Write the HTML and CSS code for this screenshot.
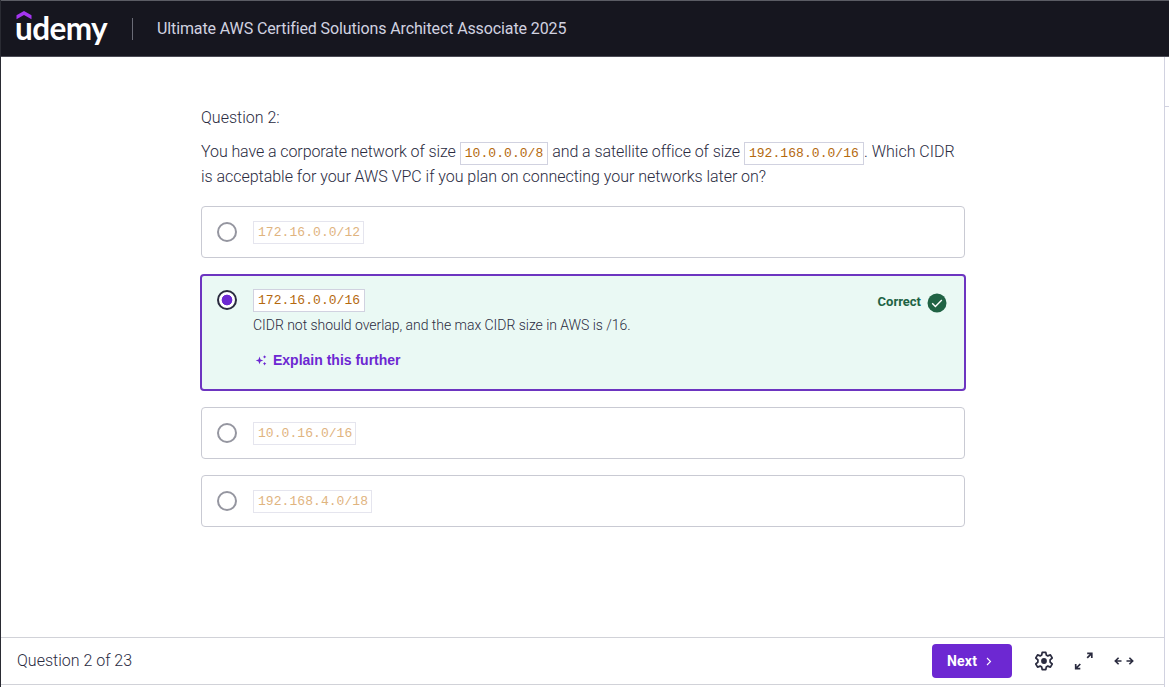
FILE: index.html
```html
<!DOCTYPE html>
<html lang="en">
<head>
<meta charset="utf-8">
<title>Ultimate AWS Certified Solutions Architect Associate 2025</title>
<link rel="stylesheet" href="styles.css">
</head>
<body>
<div class="app">
  <header class="header">
    <div class="logo">
      <svg class="logo-hat" width="16" height="9" viewBox="0 0 16 9"><path d="M8 0l7.5 4.2v4L8 4 .5 8.2v-4z" fill="#a435f0"/></svg>
      <span class="logo-text">udemy</span>
    </div>
    <span class="divider"></span>
    <span class="title">Ultimate AWS Certified Solutions Architect Associate 2025</span>
  </header>
  <div class="body">
    <div class="main">
      <main class="quiz">
        <div class="number">Question 2:</div>
        <div class="prompt"><span class="p1">You have a corporate network of size</span> <code>10.0.0.0/8</code> <span class="p2">and a satellite office of size</span> <code>192.168.0.0/16</code><span class="p3">. Which CIDR</span><br><span class="p4">is acceptable for your AWS VPC if you plan on connecting your networks later on?</span></div>
        <div class="answers">
          <div class="answer muted"><span class="radio"></span><code>172.16.0.0/12</code></div>
          <div class="answer chosen">
            <span class="radio"></span>
            <div class="detail">
              <code>172.16.0.0/16</code>
              <div class="note"><span>CIDR not should overlap, and the max CIDR size in AWS is /16.</span></div>
              <div class="explain">
                <svg width="12" height="12" viewBox="0 0 12 12" fill="#6d28d2"><path d="M4.500 2.600L5.500 5.400 8.300 6.400 5.500 7.400 4.500 10.200 3.500 7.400.7 6.400l2.800-1zM9.600 1.200l.6 1.100 1.100.6-1.100.6-.6 1.100L9 3.500l-1.100-.6L9 2.300zM9.600 8l.6 1.100 1.100.6-1.100.6-.6 1.100L9 10.300l-1.100-.6L9 9.100z"/></svg>
                <span>Explain this further</span>
              </div>
            </div>
            <div class="result"><span>Correct</span>
              <svg width="20" height="20" viewBox="0 0 20 20"><circle cx="10" cy="10" r="9.500" fill="#206344"/><path d="M5.200 10.200l3.200 3.200 6.400-6.500" fill="none" stroke="#fff" stroke-width="1.400"/></svg>
            </div>
          </div>
          <div class="answer muted"><span class="radio"></span><code>10.0.16.0/16</code></div>
          <div class="answer muted"><span class="radio"></span><code>192.168.4.0/18</code></div>
        </div>
      </main>
      <footer class="footer">
        <span class="progress">Question 2 of 23</span>
        <div class="next"><span>Next</span><svg width="6" height="9" viewBox="0 0 6 9"><path d="M1 1l3.500 3.500L1 8" fill="none" stroke="#fff" stroke-width="1.100"/></svg></div>
        <svg class="gear" width="20" height="20" viewBox="0 0 20 20" fill="none" stroke="#2a2b3f" stroke-width="1.700" stroke-linejoin="round"><path d="M8.200 1.300h3.600l.5 2.700 1.500.9 2.600-1 1.800 3.100-2.100 1.800v2.400l2.100 1.800-1.800 3.100-2.600-1-1.500.9-.5 2.700H8.200L7.700 16l-1.500-.9-2.600 1L1.800 13l2.100-1.800V8.800L1.800 7l1.800-3.100 2.600 1L7.700 4z"/><circle cx="10" cy="10" r="2.900" fill="#2a2b3f" stroke="none"/></svg>
        <svg class="expand" width="20" height="20" viewBox="0 0 20 20" fill="none" stroke="#2a2b3f" stroke-width="1.700"><path d="M13.200 2.300h4.600v4.600M17.500 2.600l-4.300 4.300M6.300 17.600H1.700V13M2 17.300L6.300 13"/></svg>
        <svg class="widen" width="20" height="10" viewBox="0 0 20 10" fill="none" stroke="#2a2b3f" stroke-width="1.600"><path d="M7.500 5h-6M4.600 1.700L1.300 5l3.300 3.300M12.500 5h6M15.400 1.700L18.700 5l-3.300 3.300"/></svg>
      </footer>
      <div class="below"></div>
    </div>
    <aside class="side"><div class="side-head"></div></aside>
  </div>
</div>
</body>
</html>
```
FILE: styles.css
```css
* { box-sizing: border-box; }
body { margin: 0; background: #fff; color: #2a2b3f; font-family: Roboto, "Liberation Sans", sans-serif; font-weight: 300; font-size: 16px; }
.app { height: 687px; display: flex; flex-direction: column; border-left: 1px solid #2a2b33; overflow: hidden; }
.header { height: 57px; flex: none; display: flex; align-items: center; background: #16161f; border-top: 1px solid #5b5c64; border-bottom: 1px solid #4b4b55; padding-left: 15px; }
.logo { width: 93px; height: 55px; position: relative; color: #fff; }
.logo-hat { position: absolute; left: 0; top: 10px; }
.logo-text { display: block; font: 700 31.500px/40px Lato, sans-serif; letter-spacing: -0.600px; padding-top: 7px; margin-left: -1px; }
.divider { width: 1px; height: 22px; background: #6a6b76; margin: 0 24px 0 23px; }
.title { color: #d1d2e0; white-space: nowrap; font-weight: 400; letter-spacing: -0.110px; }
.body { flex: 1; display: flex; min-height: 0; }
.main { flex: 1; display: flex; flex-direction: column; }
.quiz { flex: 1; width: 764px; margin-left: 200px; padding-top: 48px; }
.number { line-height: 26px; }
.prompt { line-height: 25px; margin-top: 8px; height: 50px; white-space: nowrap; }
.p1, .p2 { letter-spacing: -0.085px; }
.p4 { letter-spacing: -0.030px; position: relative; top: -1px; }
code { font: 400 13px/21px "Liberation Mono", monospace; letter-spacing: 0.060px; color: #b4690e; border: 1px solid #d1d2e0; background: #fff; padding: 0 4px; height: 23px; display: inline-block; }
.answer code { padding: 0 3px 0 4px; }
.prompt code { vertical-align: 0; }
.answers { display: flex; flex-direction: column; gap: 16px; margin-top: 17px; }
.answer { height: 52px; border: 1px solid #c9cad3; border-radius: 4px; padding: 14px 15px; display: flex; align-items: flex-start; }
.radio { width: 20px; height: 20px; border: 2px solid #9596a0; border-radius: 50%; flex: none; margin: 1px 16px 0 0; }
.muted code { color: #dfb47f; border-color: #e5e5ee; }
.chosen { height: 117px; border: 2px solid #6d35c0; background: #eaf9f4; padding: 13px 17px 0 15px; width: 766px; margin-left: -1px; }
.chosen .radio { border-color: #2a2b3f; background: radial-gradient(circle, #6d28d2 5px, #fff 5.700px); }
.chosen code { display: block; width: 112px; }
.note { font-size: 14px; line-height: 20px; letter-spacing: -0.030px; margin-top: 3px; white-space: nowrap; }
.explain { display: flex; align-items: center; gap: 6px; margin: 15px 0 0 2px; font: 700 14px/20px "Liberation Sans", sans-serif; color: #6d28d2; }
.result { margin-left: auto; display: flex; align-items: center; gap: 6px; font-size: 13px; font-weight: 700; line-height: 20px; color: #206344; padding-top: 3px; }
.result span { padding-bottom: 1px; }
.footer { height: 48px; flex: none; border-top: 1px solid #d1d2d8; border-bottom: 1px solid #d1d2d8; display: flex; align-items: center; padding: 0 30px 0 16px; }
.progress { flex: 1; padding-bottom: 1px; }
.next { width: 80px; height: 34px; border-radius: 4px; background: #6d28d2; color: #fff; font-weight: 700; font-size: 14px; letter-spacing: 0.200px; display: flex; align-items: center; gap: 9px; padding-left: 15px; margin-right: 22px; }
.gear { margin-right: 20px; }
.expand { margin-right: 20px; }
.below { height: 2px; }
.side { width: 5px; border-left: 1px solid #d1d2e0; }
.side-head { height: 50px; border-bottom: 1px solid #d1d2e0; }
```
